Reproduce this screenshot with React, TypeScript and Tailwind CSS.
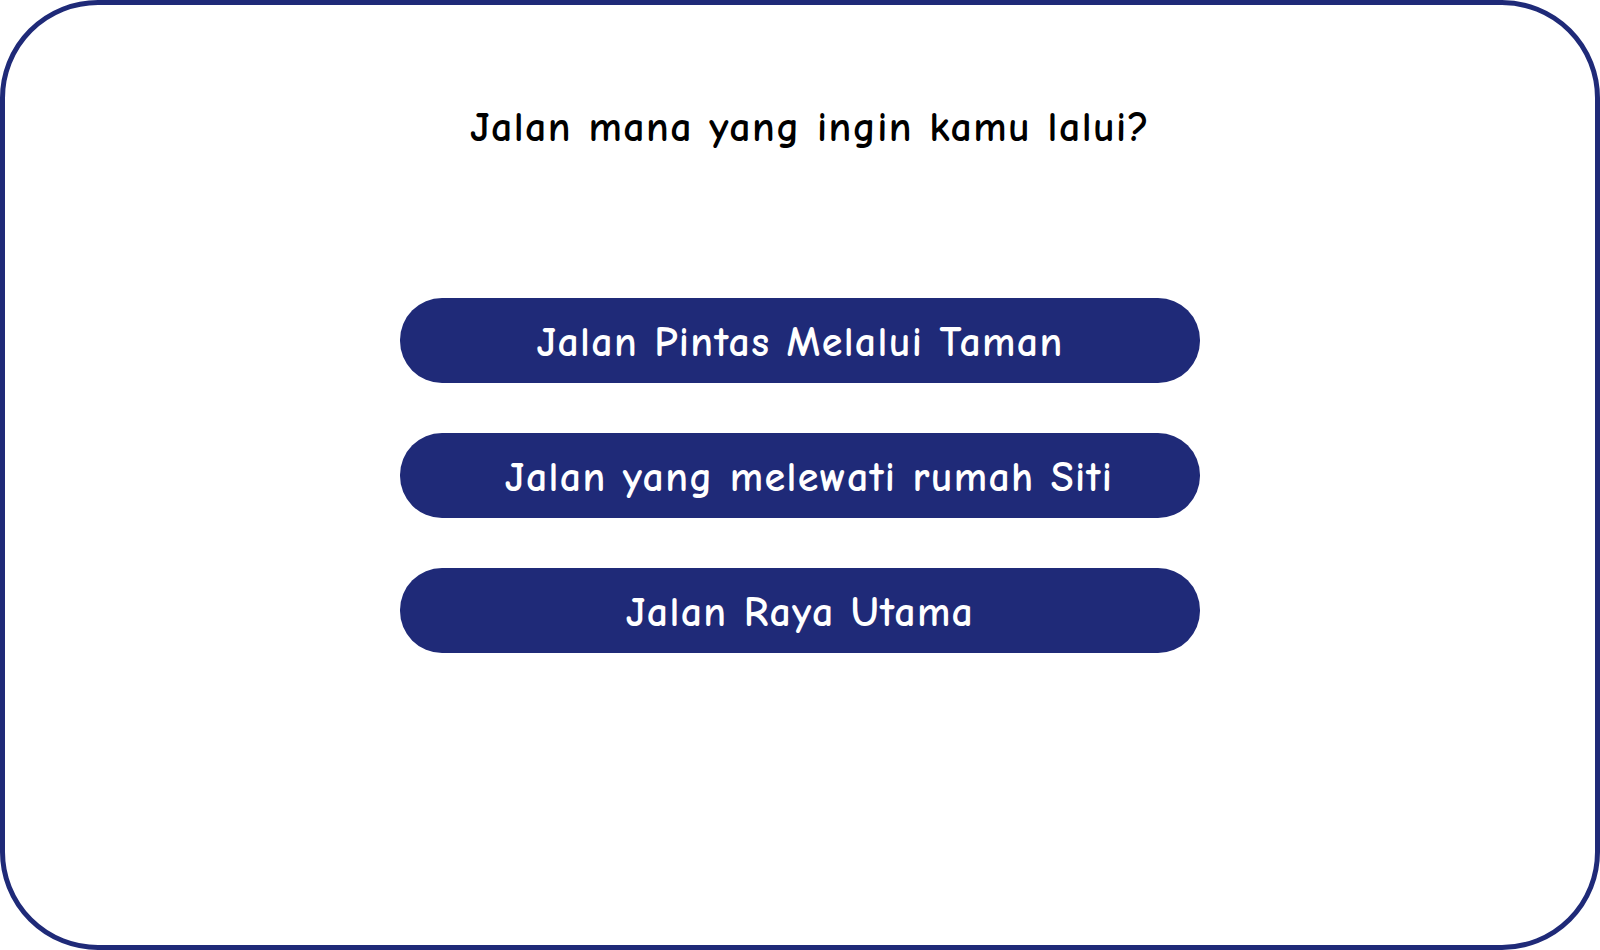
const OPTIONS = [
  { label: "Jalan Pintas Melalui Taman", shift: "" },
  { label: "Jalan yang melewati rumah Siti", shift: "pl-[18px]" },
  { label: "Jalan Raya Utama", shift: "" },
];

export default function App() {
  return (
    <div className="h-[950px] w-[1600px] bg-white">
      <div
        className="flex h-full w-full flex-col items-center rounded-[98px] border-[5px] border-[#1f2a78] pt-[99px]"
        style={{ fontFamily: '"Comic Neue", "Comic Sans MS", "Lato", "DejaVu Sans", sans-serif' }}
      >
        <h1 className="pl-[20px] text-[42px] font-bold leading-[48px] tracking-[1.4px] text-black">
          Jalan mana yang ingin kamu lalui?
        </h1>

        <div className="mt-[146px] flex flex-col gap-[50px]">
          {OPTIONS.map((o) => (
            <button
              key={o.label}
              className={`flex h-[85px] w-[800px] items-center justify-center rounded-[42px] bg-[#1f2a78] pt-[3px] text-[42px] font-bold tracking-[1.3px] text-white ${o.shift}`}
            >
              {o.label}
            </button>
          ))}
        </div>
      </div>
    </div>
  );
}
